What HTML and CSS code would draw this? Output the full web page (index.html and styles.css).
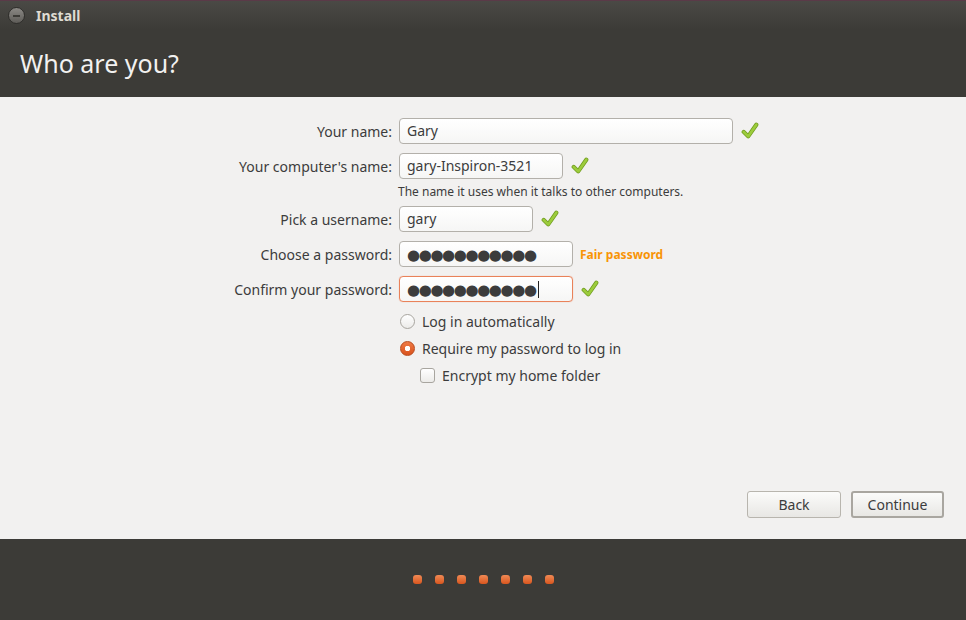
FILE: index.html
```html
<!DOCTYPE html>
<html lang="en">
<head>
    <meta charset="UTF-8">
    <title>Install</title>
    <link rel="stylesheet" href="styles.css">
</head>
<body>
    <div class="window">
        <div class="titlebar">
            <span class="close-btn"><span class="close-bar"></span></span>
            <span class="title">Install</span>
        </div>
        <div class="header">
            <h1>Who are you?</h1>
        </div>

        <div class="content">
            <div class="form">
                <div class="row">
                    <label>Your name:</label>
                    <div class="field w-name">Gary</div>
                    <svg class="check" viewBox="0 0 20 20"><path d="M3 11 L8 16 L17 3" fill="none" stroke="#6f9a1e" stroke-width="4.6" stroke-linecap="round" stroke-linejoin="round"/><path d="M3 11 L8 16 L17 3" fill="none" stroke="#9ccc3c" stroke-width="3" stroke-linecap="round" stroke-linejoin="round"/></svg>
                </div>
                <div class="row">
                    <label>Your computer's name:</label>
                    <div class="field w-computer">gary-Inspiron-3521</div>
                    <svg class="check" viewBox="0 0 20 20"><path d="M3 11 L8 16 L17 3" fill="none" stroke="#6f9a1e" stroke-width="4.6" stroke-linecap="round" stroke-linejoin="round"/><path d="M3 11 L8 16 L17 3" fill="none" stroke="#9ccc3c" stroke-width="3" stroke-linecap="round" stroke-linejoin="round"/></svg>
                </div>
                <div class="hint">The name it uses when it talks to other computers.</div>
                <div class="row">
                    <label>Pick a username:</label>
                    <div class="field w-user">gary</div>
                    <svg class="check" viewBox="0 0 20 20"><path d="M3 11 L8 16 L17 3" fill="none" stroke="#6f9a1e" stroke-width="4.6" stroke-linecap="round" stroke-linejoin="round"/><path d="M3 11 L8 16 L17 3" fill="none" stroke="#9ccc3c" stroke-width="3" stroke-linecap="round" stroke-linejoin="round"/></svg>
                </div>
                <div class="row">
                    <label>Choose a password:</label>
                    <div class="field w-pass dots">●●●●●●●●●●●</div>
                    <span class="strength">Fair password</span>
                </div>
                <div class="row">
                    <label>Confirm your password:</label>
                    <div class="field w-pass dots focused">●●●●●●●●●●●<span class="caret"></span></div>
                    <svg class="check" viewBox="0 0 20 20"><path d="M3 11 L8 16 L17 3" fill="none" stroke="#6f9a1e" stroke-width="4.6" stroke-linecap="round" stroke-linejoin="round"/><path d="M3 11 L8 16 L17 3" fill="none" stroke="#9ccc3c" stroke-width="3" stroke-linecap="round" stroke-linejoin="round"/></svg>
                </div>

                <div class="options">
                    <div class="option"><span class="radio"></span>Log in automatically</div>
                    <div class="option"><span class="radio selected"></span>Require my password to log in</div>
                    <div class="option sub"><span class="checkbox"></span>Encrypt my home folder</div>
                </div>
            </div>

            <div class="buttons">
                <button class="btn">Back</button>
                <button class="btn default">Continue</button>
            </div>
        </div>

        <div class="footer">
            <span class="dot"></span>
            <span class="dot"></span>
            <span class="dot"></span>
            <span class="dot"></span>
            <span class="dot"></span>
            <span class="dot"></span>
            <span class="dot"></span>
        </div>
    </div>
</body>
</html>
```

FILE: styles.css
```css
body {
    margin: 0;
    font-family: "Noto Sans", "DejaVu Sans", sans-serif;
    background-color: #3c3b37;
}
.window {
    width: 966px;
    height: 620px;
    display: flex;
    flex-direction: column;
}
.titlebar {
    height: 30px;
    display: flex;
    align-items: center;
    background: linear-gradient(#4a4945, #3c3b37);
    border-top: 1px solid #5a3a48;
    box-sizing: border-box;
}
.close-btn {
    width: 15px;
    height: 15px;
    margin-left: 8px;
    border-radius: 50%;
    background: linear-gradient(#8a8884, #5e5c58);
    border: 1px solid #2e2d2a;
    display: flex;
    align-items: center;
    justify-content: center;
}
.close-bar {
    width: 7px;
    height: 2px;
    background-color: #3c3b37;
}
.title {
    margin-left: 11px;
    color: #dfdbd2;
    font-size: 14px;
    font-weight: bold;
}
.header {
    height: 67px;
    background-color: #3c3b37;
}
.header h1 {
    margin: 0;
    padding: 16px 0 0 20px;
    font-size: 25px;
    font-weight: normal;
    color: #f2f1f0;
}
.content {
    height: 442px;
    background-color: #f2f1f0;
    display: flex;
    flex-direction: column;
    justify-content: space-between;
    padding-top: 21px;
    padding-bottom: 21px;
    box-sizing: border-box;
}
.form {
    display: flex;
    flex-direction: column;
}
.row {
    display: flex;
    align-items: center;
    height: 26px;
    margin-bottom: 9px;
}
.row label {
    width: 399px;
    padding-right: 7px;
    box-sizing: border-box;
    text-align: right;
    font-size: 14px;
    color: #3c3c3c;
}
.field {
    height: 26px;
    box-sizing: border-box;
    border: 1px solid #b3b0aa;
    border-radius: 4px;
    background: linear-gradient(#ffffff, #f6f6f5);
    padding: 0 7px;
    font-size: 14px;
    line-height: 24px;
    color: #3c3c3c;
}
.w-name { width: 334px; }
.w-computer { width: 164px; }
.w-user { width: 134px; }
.w-pass { width: 174px; }
.dots {
    font-size: 15px;
    letter-spacing: -1.4px;
    color: #3c3c3c;
}
.focused {
    border-color: #e9825a;
    box-shadow: 0 0 1px #f0a080;
}
.caret {
    display: inline-block;
    width: 1px;
    height: 17px;
    background-color: #222;
    vertical-align: -3px;
    margin-left: 2px;
}
.check {
    width: 18px;
    height: 18px;
    margin-left: 8px;
}
.strength {
    margin-left: 7px;
    font-size: 12px;
    font-weight: bold;
    color: #f89406;
}
.hint {
    margin: -5px 0 5px 398px;
    font-size: 12px;
    color: #3c3c3c;
    height: 18px;
}
.options {
    margin-left: 400px;
    margin-top: -3px;
}
.option {
    display: flex;
    align-items: center;
    height: 27px;
    font-size: 14px;
    color: #3c3c3c;
}
.option.sub {
    margin-left: 20px;
}
.radio {
    width: 15px;
    height: 15px;
    box-sizing: border-box;
    border-radius: 50%;
    border: 1px solid #a8a59f;
    background: linear-gradient(#ffffff, #ecebe9);
    margin-right: 7px;
}
.radio.selected {
    border-color: #b84a1c;
    background: radial-gradient(circle, #ffffff 0 2.5px, transparent 3px), linear-gradient(#ef7a45, #d9521c);
}
.checkbox {
    width: 15px;
    height: 15px;
    box-sizing: border-box;
    border-radius: 3px;
    border: 1px solid #a8a59f;
    background: linear-gradient(#ffffff, #ecebe9);
    margin-right: 7px;
}
.buttons {
    display: flex;
    justify-content: flex-end;
    gap: 10px;
    padding-right: 22px;
}
.btn {
    width: 94px;
    height: 27px;
    border: 1px solid #b8b5ae;
    border-radius: 3px;
    background: linear-gradient(#fbfbfa, #e8e7e4);
    font-family: "Noto Sans", "DejaVu Sans", sans-serif;
    font-size: 14px;
    color: #3c3c3c;
    padding: 0;
}
.btn.default {
    width: 93px;
    border: 2px solid #a9a6a0;
}
.footer {
    flex: 1;
    background-color: #3c3b37;
    display: flex;
    justify-content: center;
    align-items: center;
    gap: 13px;
}
.dot {
    width: 9px;
    height: 9px;
    border-radius: 3px;
    background: linear-gradient(#f08a55, #d9561e);
}
```
